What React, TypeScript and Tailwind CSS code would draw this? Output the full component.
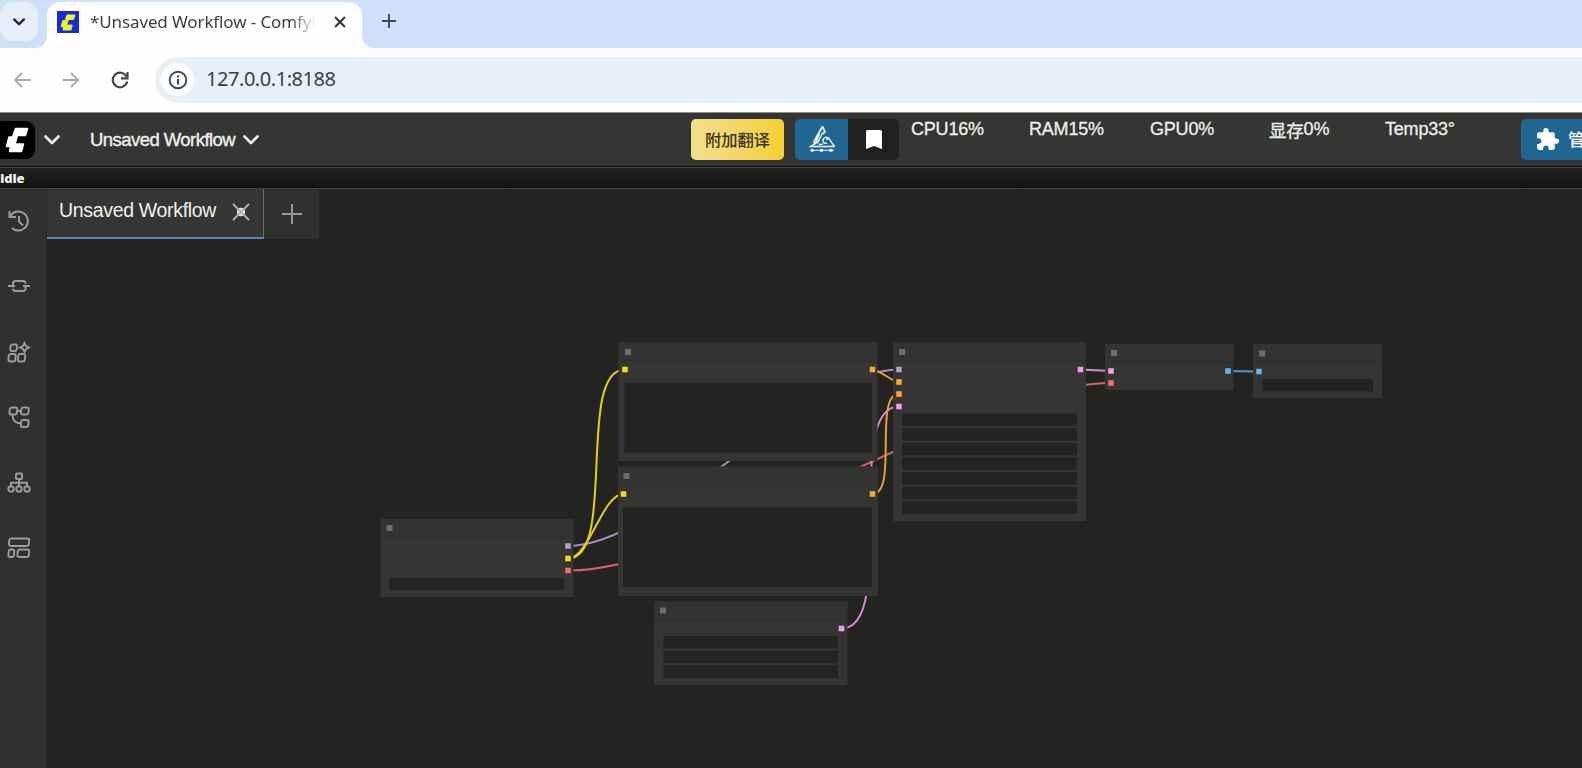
import React from "react";

type Pt = [number, number];
type Rect = [number, number, number, number];

const COLORS = {
  model: "#b0a0d8",
  clip: "#f0d821",
  vae: "#f06e6e",
  cond: "#f5a93c",
  latent: "#f29cee",
  image: "#68b1ea",
};

interface GraphNode {
  box: Rect;
  badge: Pt;
  ports: { at: Pt; color: string }[];
  widgets: Rect[];
}

const rows = (x: number, y: number, w: number, count: number): Rect[] =>
  Array.from({ length: count }, (_, i) => [x, y + i * 14.65, w, 12.5] as Rect);

const nodes: GraphNode[] = [
  {
    box: [380.5, 519, 193, 78],
    badge: [389.5, 528],
    ports: [
      { at: [568, 546], color: COLORS.model },
      { at: [568, 558.5], color: COLORS.clip },
      { at: [568, 570.5], color: COLORS.vae },
    ],
    widgets: [[389.5, 578, 174.5, 12]],
  },
  {
    box: [618.5, 342.6, 259, 118.4],
    badge: [628, 352],
    ports: [
      { at: [625, 369.5], color: COLORS.clip },
      { at: [872.5, 369.5], color: COLORS.cond },
    ],
    widgets: [[624.5, 383, 247.5, 69.5]],
  },
  {
    box: [618, 466.5, 260, 129.5],
    badge: [626.5, 476],
    ports: [
      { at: [623.5, 494], color: COLORS.clip },
      { at: [872.5, 494], color: COLORS.cond },
    ],
    widgets: [[623, 507.5, 249, 79.5]],
  },
  {
    box: [654, 601.5, 193.5, 83.5],
    badge: [663, 610.5],
    ports: [{ at: [841.5, 628.5], color: COLORS.latent }],
    widgets: rows(663.5, 636, 174.5, 3),
  },
  {
    box: [893, 342.6, 193, 178.4],
    badge: [902.3, 352],
    ports: [
      { at: [899, 369.5], color: COLORS.model },
      { at: [899, 382], color: COLORS.cond },
      { at: [899, 394], color: COLORS.cond },
      { at: [899, 406.5], color: COLORS.latent },
      { at: [1080.5, 369.5], color: COLORS.latent },
    ],
    widgets: rows(902, 413.5, 175, 7),
  },
  {
    box: [1105, 344, 128.5, 46],
    badge: [1114, 353],
    ports: [
      { at: [1111, 371], color: COLORS.latent },
      { at: [1111, 383], color: COLORS.vae },
      { at: [1228, 371], color: COLORS.image },
    ],
    widgets: [],
  },
  {
    box: [1253, 344, 129, 54],
    badge: [1262.3, 353.5],
    ports: [{ at: [1259, 371.5], color: COLORS.image }],
    widgets: [[1262.5, 379, 110.5, 12.5]],
  },
];

const links: { from: Pt; to: Pt; color: string }[] = [
  { from: [568, 546], to: [899, 369.5], color: "#9d93c4" },
  { from: [568, 558.5], to: [625, 369.5], color: "#e6cd22" },
  { from: [568, 558.5], to: [623.5, 494], color: "#e6cd22" },
  { from: [568, 570.5], to: [1111, 383], color: "#d96262" },
  { from: [841.5, 628.5], to: [899, 406.5], color: "#d488d2" },
  { from: [872.5, 369.5], to: [899, 382], color: "#e6a03a" },
  { from: [872.5, 494], to: [899, 394], color: "#e6a03a" },
  { from: [1080.5, 369.5], to: [1111, 371], color: "#d488d2" },
  { from: [1228, 371], to: [1259, 371.5], color: "#4f97cb" },
];

function curve([x1, y1]: Pt, [x2, y2]: Pt) {
  const d = Math.hypot(x2 - x1, y2 - y1) * 0.25;
  return `M${x1} ${y1} C${x1 + d} ${y1} ${x2 - d} ${y2} ${x2} ${y2}`;
}

function Graph() {
  return (
    <svg className="block h-[528px] w-[1535px]" viewBox="47 240 1535 528">
      {links.map((l, i) => (
        <path key={i} d={curve(l.from, l.to)} fill="none" stroke={l.color} strokeWidth="2" />
      ))}
      {nodes.map((n, i) => {
        const [x, y, w, h] = n.box;
        return (
          <g key={i}>
            <rect x={x} y={y} width={w} height={h} fill="#353534" />
            <rect x={x} y={y} width={w} height="18" fill="#333332" />
            <rect x={x} y={y + 18} width={w} height="1" fill="#2f2f2e" />
            <rect x={n.badge[0] - 3} y={n.badge[1] - 3} width="6" height="6" fill="#6e6e6e" />
            {n.widgets.map(([a, b, c, d], k) => (
              <rect key={k} x={a} y={b} width={c} height={d} fill="#232322" />
            ))}
            {n.ports.map((p, k) => (
              <rect
                key={k}
                x={p.at[0] - 2.8}
                y={p.at[1] - 2.8}
                width="5.6"
                height="5.6"
                fill={p.color}
                stroke="#29292966"
                strokeWidth="1"
                paintOrder="stroke"
              />
            ))}
          </g>
        );
      })}
    </svg>
  );
}

function LogoMark({ className, color }: { className: string; color: string }) {
  return (
    <svg viewBox="0 0 24 26" className={className} fill={color} stroke={color} strokeWidth="1.5" strokeLinejoin="round">
      <path d="M10.500 1.500H22.500l-2 7H12.500l-2.500 8.500h8.500l-2 7.500H4.500l1-5H1.500l2.500-9.500h3.500z" />
    </svg>
  );
}

function Chevron({ className }: { className: string }) {
  return (
    <svg viewBox="0 0 16 10" className={className} fill="none" stroke="currentColor" strokeLinecap="round" strokeLinejoin="round">
      <path d="M1.500 1.500 8 8l6.500-6.500" />
    </svg>
  );
}

function BrowserTabs() {
  return (
    <div className="flex h-12 bg-[#cfe0f9]">
      <div className="relative flex w-[47px] shrink-0 items-start">
        <div className="mt-[2px] flex h-[39px] w-[38px] items-center justify-center rounded-[13px] bg-[#e6eff9] text-[#1f2226]">
          <Chevron className="h-[8px] w-[12px] stroke-[3]" />
        </div>
        <svg viewBox="0 0 12 12" className="absolute right-0 bottom-0 h-3 w-3">
          <path d="M12 0v12H0A12 12 0 0 0 12 0" fill="#fdfefd" />
        </svg>
      </div>
      <div className="mt-[2px] flex h-[46px] w-[315px] items-center rounded-t-[13px] bg-[#fdfefd] pb-[6px]">
        <div className="ml-[10px] flex h-[22px] w-[22px] shrink-0 items-center justify-center bg-[#1a2bd0]">
          <LogoMark className="h-[17px] w-[16px]" color="#eff52c" />
        </div>
        <div className="ml-[11px] w-[228px] overflow-hidden bg-linear-to-r from-[#3a3b3d] from-88% to-transparent to-99% bg-clip-text font-['Noto_Sans',sans-serif] text-[17px] leading-[26px] tracking-[-0.12px] whitespace-nowrap text-transparent">
          *Unsaved Workflow - ComfyU
        </div>
        <svg viewBox="0 0 12 12" className="ml-[16px] h-[12px] w-[12px]" stroke="#36383a" strokeWidth="2.2">
          <path d="M1 1l10 10M11 1 1 11" />
        </svg>
      </div>
      <div className="relative flex w-[60px] items-start">
        <svg viewBox="0 0 12 12" className="absolute bottom-0 left-0 h-3 w-3">
          <path d="M0 0v12h12A12 12 0 0 1 0 0" fill="#fdfefd" />
        </svg>
        <svg viewBox="0 0 14 14" className="mt-[14px] ml-[20px] h-[14px] w-[14px]" stroke="#414850" strokeWidth="1.9">
          <path d="M7 0v14M0 7h14" />
        </svg>
      </div>
    </div>
  );
}

function AddressBar() {
  return (
    <div className="flex h-[65px] items-center border-b border-[#8d8e8d] bg-[#fdfefd] pb-px">
      <svg viewBox="0 0 18 16" className="ml-[13px] h-[16px] w-[18px]" fill="none" stroke="#a8a9a9" strokeWidth="1.8">
        <path d="M17.500 8H2M9 1 2 8l7 7" />
      </svg>
      <svg viewBox="0 0 18 16" className="ml-[31px] h-[16px] w-[18px]" fill="none" stroke="#a8a9a9" strokeWidth="1.8">
        <path d="M.500 8H16M9 1l7 7-7 7" />
      </svg>
      <svg viewBox="0 0 18 18" className="ml-[31px] h-[18px] w-[18px]" fill="none" stroke="#464747" strokeWidth="2.2">
        <path d="M15.500 5.500A7.300 7.300 0 1 0 16.200 10.500M16.500 1v6.300H10" />
      </svg>
      <div className="ml-[26px] flex h-[46px] flex-1 items-center rounded-l-[23px] bg-[#e9eff6]">
        <div className="ml-[6px] flex h-[33px] w-[33px] items-center justify-center rounded-full bg-[#fcfdfe]">
          <svg viewBox="0 0 20 20" className="h-[20px] w-[20px]" fill="none" stroke="#434546" strokeWidth="1.9">
            <circle cx="10" cy="10" r="8.300" />
            <path d="M10 9v5.500M10 5.500v2" strokeWidth="2.100" />
          </svg>
        </div>
        <span className="ml-[12px] pb-px font-['Noto_Sans',sans-serif] text-[20px] tracking-[-0.45px] text-[#3b4046]">127.0.0.1:8188</span>
      </div>
    </div>
  );
}

function Stat({ label, prefix, className }: { label: string; prefix?: string; className: string }) {
  return (
    <div className={`shrink-0 whitespace-nowrap ${className}`}>
      {prefix && <span className="inline-block translate-y-[2px] text-[17.500px] leading-[20px]">{prefix}</span>}
      {label}
    </div>
  );
}

function MenuBar() {
  return (
    <div className="flex h-[53px] items-start overflow-hidden bg-[#353534] font-['Liberation_Sans','Noto_Sans_CJK_SC',sans-serif] text-[#eeeeec]">
      <div className="mt-[8px] flex h-[38px] w-[35px] shrink-0 items-center justify-center rounded-r-[9px] bg-black pr-[2px]">
        <LogoMark className="h-[26px] w-[24px]" color="#ffffff" />
      </div>
      <Chevron className="mt-[22px] ml-[9px] h-[10px] w-[16px] shrink-0 stroke-[2.700]" />
      <div className="mt-[13px] ml-[30px] w-[146px] shrink-0 text-[18.500px] leading-[28px] tracking-[-0.55px] whitespace-nowrap [-webkit-text-stroke:0.4px]">
        Unsaved Workflow
      </div>
      <Chevron className="mt-[22px] ml-[7px] h-[10px] w-[16px] shrink-0 stroke-[2.700]" />
      <div className="mt-[6px] ml-[432px] flex h-[41px] w-[93px] shrink-0 items-center justify-center rounded-[5px] bg-linear-to-r from-[#f2de8c] to-[#f5cf2c] font-['Noto_Sans_CJK_SC',sans-serif] text-[16.300px] font-medium text-[#3a3520]">
        附加翻译
      </div>
      <div className="mt-[6px] ml-[11px] flex h-[41px] w-[104px] shrink-0 overflow-hidden rounded-[5px] bg-[#20201f]">
        <div className="flex w-[53px] items-center justify-center bg-[#216593]">
          <svg viewBox="0 0 26 27" className="mb-[3px] h-[27px] w-[26px]" fill="none" stroke="#e9f3f8" strokeWidth="1.400">
            <path d="M13.500 1.500 5 16.500M13.500 1.500l2.500 5.500-3 2M10.500 8 7 17.500" strokeWidth="1.800" />
            <path d="M13 9 9 17l-7.500 4.500h24l-5.500-8-3 1M4 17.500h5M9.500 18.500c1.500 1.500 3 1.500 4.500 0M20 13.500c-2-2.500-6-1-6 2 0 2 2 3.500 4 2.500" />
            <path d="M1 25.300h24" strokeWidth="1.100" />
            <path d="M2 25.300h2.500M11 25.300h3M20.500 25.300h3" strokeWidth="2.800" />
          </svg>
        </div>
        <div className="flex flex-1 items-center justify-center">
          <svg viewBox="0 0 16 19" className="h-[19px] w-[16px]" fill="#fff">
            <path d="M1.500 0h13Q16 0 16 1.500V19l-8-3-8 3V1.500Q0 0 1.500 0" />
          </svg>
        </div>
      </div>
      <div className="mt-[3px] ml-[12px] flex text-[18px] leading-[26px] tracking-[-0.2px] [-webkit-text-stroke:0.3px]">
        <Stat label="CPU16%" className="w-[118px]" />
        <Stat label="RAM15%" className="w-[121px]" />
        <Stat label="GPU0%" className="w-[119px]" />
        <Stat prefix="显存" label="0%" className="w-[116px]" />
        <Stat label="Temp33°" className="w-[136px]" />
      </div>
      <div className="mt-[6px] flex h-[41px] w-[90px] shrink-0 items-center rounded-l-[5px] bg-[#216593] text-white">
        <svg viewBox="0 0 24 24" className="ml-[14px] h-[25px] w-[25px] shrink-0" fill="#fff">
          <path d="M20.500 11H19V7c0-1.100-.9-2-2-2h-4V3.500a2.500 2.500 0 0 0-5 0V5H4c-1.100 0-1.990.9-1.990 2v3.800H3.500c1.490 0 2.700 1.210 2.700 2.700s-1.210 2.700-2.700 2.700H2V20c0 1.100.9 2 2 2h3.800v-1.500c0-1.490 1.210-2.700 2.700-2.700 1.490 0 2.700 1.210 2.700 2.700V22H17c1.100 0 2-.9 2-2v-4h1.500a2.500 2.500 0 0 0 0-5z" />
        </svg>
        <span className="mt-[2px] ml-[8px] shrink-0 text-[17px] font-medium whitespace-nowrap">管理</span>
      </div>
    </div>
  );
}

const sideIcons: React.ReactNode[] = [
  <g key="history">
    <path d="M1.500 1v6h6.500M2 6.500A9.500 9.500 0 1 1 4 18M11 6v5.500l4 4" strokeWidth="2" />
  </g>,
  <g key="node">
    <rect x="5" y="6" width="12.500" height="10" rx="2.500" />
    <path d="M0 11h7M15 11h7" />
    <path d="M17.500 8.800v1.300M5 12.300v1.500" stroke="#30302f" strokeWidth="2.500" />
  </g>,
  <g key="models">
    <rect x="2.500" y="3.500" width="6.500" height="6.500" rx="2" transform="skewX(-5) translate(.5 0)" />
    <rect x="1.500" y="13" width="7" height="7.500" rx="2" transform="skewX(-5) translate(.5 0)" />
    <rect x="11" y="13" width="7" height="7.500" rx="2" transform="skewX(-5) translate(.5 0)" />
    <path d="M16.500 2 18 5l3 1.500L18 8l-1.500 3L15 8l-3-1.500L15 5z" />
  </g>,
  <g key="workflow">
    <rect x="2" y="1.500" width="7.500" height="7" rx="2" transform="skewX(-5)" />
    <rect x="13.500" y="1.500" width="7.500" height="7" rx="2" transform="skewX(-5)" />
    <rect x="14.500" y="14" width="7.500" height="7" rx="2" transform="skewX(-5)" />
    <path d="M9.500 5H13.500M4.500 8.500c0 6 3 9 9 9" />
  </g>,
  <g key="sitemap" strokeWidth="1.9">
    <rect x="8" y="1.500" width="6" height="5.500" rx="1" />
    <path d="M11 7v7.500M3 14.500v-3.800h16v3.800" />
    <circle cx="3" cy="17" r="2.700" />
    <circle cx="11" cy="17" r="2.700" />
    <circle cx="19" cy="17" r="2.700" />
  </g>,
  <g key="templates">
    <rect x="1.500" y="1.500" width="20" height="7.500" rx="2.200" transform="skewX(-5)" />
    <rect x="2" y="12.500" width="5.500" height="7.500" rx="2" transform="skewX(-5)" />
    <rect x="11" y="12.500" width="11.500" height="7.500" rx="2" transform="skewX(-5)" />
  </g>,
];

function Sidebar() {
  return (
    <div className="flex w-[47px] shrink-0 flex-col gap-[43.400px] border-r border-[#292928] bg-[#30302f] pt-[21px] pl-[8px]">
      {sideIcons.map((icon, i) => (
        <svg key={i} viewBox="0 0 22 22" className="h-[22px] w-[22px] overflow-visible" fill="none" stroke="#9c9c9b" strokeWidth="1.900">
          {icon}
        </svg>
      ))}
    </div>
  );
}

function WorkflowTabs() {
  return (
    <div className="flex h-[51px] font-['Liberation_Sans',sans-serif]">
      <div className="flex h-[50px] w-[217px] items-start border-r border-b-2 border-r-[#6c6c6b] border-b-[#5b80ba] bg-[#353534]">
        <div className="mt-[8px] ml-[12px] w-[159px] text-[19.500px] leading-[26px] tracking-[-0.32px] whitespace-nowrap text-[#f1f1ef]">Unsaved Workflow</div>
        <svg viewBox="0 0 18 18" className="mt-[14px] ml-[14px] h-[18px] w-[18px]" fill="none" stroke="#b4b4b2" strokeWidth="1.800">
          <path d="M1 1l16 16M17 1 1 17" />
          <circle cx="9" cy="9" r="4.200" fill="#dededc" stroke="none" />
          <path d="M5 5l8 8M13 5l-8 8" stroke="#a8a8a6" strokeWidth="1.200" />
        </svg>
      </div>
      <div className="flex h-[50px] w-[55px] items-center justify-center bg-[#30302f]">
        <svg viewBox="0 0 20 20" className="h-[20px] w-[20px]" stroke="#969694" strokeWidth="2">
          <path d="M10 0v20M0 10h20" />
        </svg>
      </div>
    </div>
  );
}

export default function App() {
  return (
    <div className="flex h-[768px] w-[1582px] flex-col overflow-hidden bg-[#232322]">
      <BrowserTabs />
      <AddressBar />
      <MenuBar />
      <div className="flex h-[23px] items-center border-t border-b border-t-[#0f0f0e] border-b-[#444443] bg-linear-to-b from-[#232322] to-[#131312] font-['Open_Sans',sans-serif] text-[13px] font-extrabold tracking-[-0.2px] text-[#f0f0ee]">
        <span className="h-full w-full border-t border-[#4a4a49] leading-[20px]">Idle</span>
      </div>
      <div className="flex flex-1">
        <Sidebar />
        <div className="flex flex-1 flex-col">
          <WorkflowTabs />
          <Graph />
        </div>
      </div>
    </div>
  );
}
